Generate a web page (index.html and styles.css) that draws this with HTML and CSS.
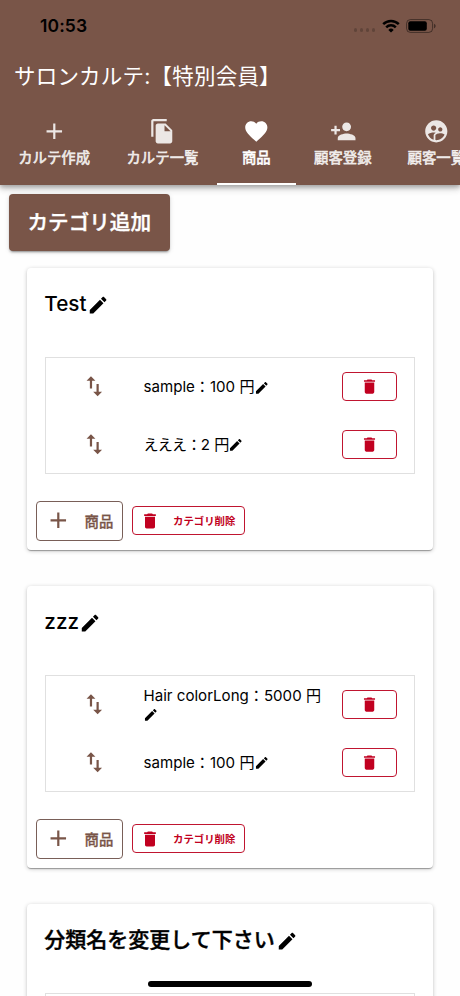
FILE: index.html
```
<!DOCTYPE html>
<html lang="ja">
<head>
<meta charset="utf-8">
<title>サロンカルテ</title>
<link rel="stylesheet" href="styles.css">
</head>
<body>
<svg class="defs" width="0" height="0">
  <symbol id="add" viewBox="0 0 24 24"><path d="M19 13h-6v6h-2v-6H5v-2h6V5h2v6h6v2z"/></symbol>
  <symbol id="copy" viewBox="0 0 24 24"><path d="M16 1H4c-1.100 0-2 .9-2 2v14h2V3h12V1zm-1 4l6 6v10c0 1.100-.9 2-2 2H7.990C6.890 23 6 22.100 6 21l.01-14c0-1.100.89-2 1.990-2h7zm-1 7h5.500L14 6.500V12z"/></symbol>
  <symbol id="heart" viewBox="0 0 24 24"><path d="M12 21.350l-1.450-1.320C5.400 15.360 2 12.280 2 8.500 2 5.420 4.420 3 7.500 3c1.740 0 3.410.81 4.500 2.090C13.090 3.810 14.760 3 16.500 3 19.580 3 22 5.420 22 8.500c0 3.780-3.400 6.860-8.550 11.540L12 21.350z"/></symbol>
  <symbol id="person-add" viewBox="0 0 24 24"><path d="M15 12c2.210 0 4-1.790 4-4s-1.790-4-4-4-4 1.790-4 4 1.790 4 4 4zm-9-2V7H4v3H1v2h3v3h2v-3h3v-2H6zm9 4c-2.670 0-8 1.340-8 4v2h16v-2c0-2.660-5.330-4-8-4z"/></symbol>
  <symbol id="people" viewBox="0 0 24 24"><path d="M11.990 2c-5.520 0-10 4.480-10 10s4.480 10 10 10 10-4.480 10-10-4.480-10-10-10zm3.610 6.340c1.070 0 1.930.86 1.930 1.930 0 1.070-.86 1.930-1.930 1.930-1.070 0-1.930-.86-1.930-1.930-.01-1.070.86-1.930 1.930-1.930zm-6-1.580c1.300 0 2.360 1.060 2.360 2.360 0 1.300-1.060 2.360-2.360 2.360s-2.360-1.060-2.360-2.360c0-1.310 1.050-2.360 2.360-2.360zm0 9.130v3.750c-2.400-.75-4.300-2.600-5.140-4.960 1.050-1.120 3.670-1.690 5.140-1.690.53 0 1.200.08 1.900.22-1.640.87-1.900 2.020-1.900 2.680zM11.990 20c-.27 0-.53-.01-.79-.04v-4.070c0-1.420 2.940-2.130 4.400-2.130 1.070 0 2.920.39 3.840 1.150-1.170 2.970-4.060 5.090-7.450 5.090z"/></symbol>
  <symbol id="edit" viewBox="0 0 24 24"><path d="M3 17.250V21h3.750L17.810 9.940l-3.750-3.750L3 17.250zM20.710 7.040c.39-.39.39-1.020 0-1.410l-2.340-2.340c-.39-.39-1.020-.39-1.410 0l-1.830 1.830 3.750 3.750 1.830-1.830z"/></symbol>
  <symbol id="trash" viewBox="0 0 24 24"><path d="M6 19c0 1.100.9 2 2 2h8c1.100 0 2-.9 2-2V7H6v12zM19 4h-3.500l-1-1h-5l-1 1H5v2h14V4z"/></symbol>
  <symbol id="swap" viewBox="0 0 24 24"><path d="M9 3L5 6.990h3V14h2V6.990h3L9 3zm7 14.010V10h-2v7.010h-3L15 21l4-3.990h-3z"/></symbol>
</svg>

<header class="appbar">
  <div class="status">
    <span class="clock">10:53</span>
    <span class="dots"><i></i><i></i><i></i><i></i></span>
    <svg class="wifi" viewBox="0 0 18 14"><g fill="none" stroke="#000" stroke-width="2.500"><path d="M1.200 5.100a11.200 11.200 0 0 1 15.600 0"/><path d="M4.200 8.300a6.900 6.900 0 0 1 9.600 0"/></g><path d="M9 13.600l-2.700-2.700a3.900 3.900 0 0 1 5.400 0z"/></svg>
    <svg class="battery" viewBox="0 0 30 14"><rect x=".6" y=".6" width="26" height="12.800" rx="3.800" fill="none" stroke="#000" stroke-opacity=".45"/><rect x="2.300" y="2.300" width="18.500" height="9.400" rx="2"/><path d="M28 4.700c2.200.8 2.200 3.800 0 4.600z" fill-opacity=".45"/></svg>
  </div>
  <h1 class="title">サロンカルテ:【特別会員】</h1>
  <nav class="tabs">
    <a class="tab wide"><svg class="icon"><use href="#add"/></svg><span>カルテ作成</span></a>
    <a class="tab wide"><svg class="icon"><use href="#copy"/></svg><span>カルテ一覧</span></a>
    <a class="tab active"><svg class="icon"><use href="#heart"/></svg><span>商品</span></a>
    <a class="tab mid"><svg class="icon"><use href="#person-add"/></svg><span>顧客登録</span></a>
    <a class="tab mid"><svg class="icon"><use href="#people"/></svg><span>顧客一覧</span></a>
  </nav>
</header>

<main>
  <button class="add-category">カテゴリ追加</button>

  <section class="card">
    <h2 class="name"><span>Test</span><svg><use href="#edit"/></svg></h2>
    <div class="items">
      <div class="item"><svg class="icon"><use href="#swap"/></svg><p>sample：100 円<svg><use href="#edit"/></svg></p><button class="remove"><svg><use href="#trash"/></svg></button></div>
      <div class="item"><svg class="icon"><use href="#swap"/></svg><p><span class="kana">えええ：</span>2 円<svg><use href="#edit"/></svg></p><button class="remove"><svg><use href="#trash"/></svg></button></div>
    </div>
    <div class="actions">
      <button class="add-item"><svg class="icon"><use href="#add"/></svg><span>商品</span></button>
      <button class="remove-category"><svg><use href="#trash"/></svg><span>カテゴリ削除</span></button>
    </div>
  </section>

  <section class="card">
    <h2 class="name"><span>zzz</span><svg><use href="#edit"/></svg></h2>
    <div class="items">
      <div class="item"><svg class="icon"><use href="#swap"/></svg><p>Hair colorLong：5000 円<svg><use href="#edit"/></svg></p><button class="remove"><svg><use href="#trash"/></svg></button></div>
      <div class="item"><svg class="icon"><use href="#swap"/></svg><p>sample：100 円<svg><use href="#edit"/></svg></p><button class="remove"><svg><use href="#trash"/></svg></button></div>
    </div>
    <div class="actions">
      <button class="add-item"><svg class="icon"><use href="#add"/></svg><span>商品</span></button>
      <button class="remove-category"><svg><use href="#trash"/></svg><span>カテゴリ削除</span></button>
    </div>
  </section>

  <section class="card">
    <h2 class="name cjk"><span>分類名を変更して下さい</span><svg><use href="#edit"/></svg></h2>
    <div class="items"></div>
  </section>
</main>
<div class="home-indicator"></div>
</body>
</html>
```

FILE: styles.css
```
* { box-sizing: border-box; }

body {
  margin: 0;
  height: 996px;
  overflow: hidden;
  background: #fefefe;
  color: #000;
  font-family: Inter, "Noto Sans CJK JP", sans-serif;
}

svg { fill: currentColor; flex: none; }
button { font-family: inherit; padding: 0; }
.defs { display: none; }
.icon { width: 26.6px; height: 26.6px; }

.appbar {
  position: relative;
  height: 185px;
  background: #795548;
  color: #fff;
  box-shadow: 0 2px 4px rgba(0,0,0,.2), 0 4px 6px rgba(0,0,0,.14), 0 1px 11px rgba(0,0,0,.12);
}

.status {
  display: flex;
  align-items: center;
  height: 51px;
  padding: 0 24px 0 40px;
  color: #000;
}
.clock { font-size: 17.5px; font-weight: 600; letter-spacing: .1px; }
.dots { display: flex; gap: 2.600px; margin: 9px 7px 0 auto; }
.dots i { width: 3.400px; height: 3.400px; border-radius: 50%; background: rgba(0,0,0,.2); }
.wifi { width: 18px; height: 14px; margin-right: 6px; }
.battery { width: 30px; height: 14px; }

.title {
  margin: 0;
  height: 50px;
  padding-left: 14px;
  font-size: 21.5px;
  font-weight: 400;
  line-height: 50px;
  letter-spacing: .2px;
  white-space: nowrap;
}

.tabs { display: flex; height: 84px; overflow: hidden; }
.tab {
  display: flex;
  flex: none;
  flex-direction: column;
  align-items: center;
  width: 79.500px;
  padding-top: 17px;
  font-size: 14.4px;
  font-weight: 500;
  line-height: 22px;
  color: rgba(255,255,255,.86);
  white-space: nowrap;
}
.tab.wide { width: 108.3px; }
.tab.mid { width: 93.5px; }
.tab span { margin-top: 2.600px; -webkit-text-stroke: .4px currentColor; }
.tab.active { color: #fff; border-bottom: 2.500px solid #fff; }

.add-category {
  display: block;
  width: 160.500px;
  height: 57px;
  margin: 8.500px 0 17px 9px;
  padding-bottom: 2px;
  border: 0;
  border-radius: 4px;
  background: #795548;
  color: #fff;
  font-size: 20.6px;
  font-weight: 500;
  -webkit-text-stroke: .4px currentColor;
  box-shadow: 0 3px 1px -2px rgba(0,0,0,.2), 0 2px 2px rgba(0,0,0,.14), 0 1px 5px rgba(0,0,0,.12);
}

.card {
  height: 282.500px;
  margin: 0 27px 35.500px;
  padding: 18px 18px 0;
  border-radius: 4px;
  background: #fff;
  box-shadow: 0 2px 1px -1px rgba(0,0,0,.2), 0 1px 1px rgba(0,0,0,.14), 0 1px 4px rgba(0,0,0,.22);
}
.name {
  display: flex;
  align-items: center;
  height: 36px;
  margin: 0 0 35.500px -.7px;
  font-size: 20.7px;
  font-weight: 500;
}
.name svg { width: 22.2px; height: 22.2px; margin-top: 3px; }
.name.cjk span { padding-bottom: 3px; font-size: 21px; -webkit-text-stroke: .4px currentColor; }
.name.cjk svg { margin-left: 1px; }

.items { height: 117px; border: 1px solid #e0e0e0; }
.item {
  display: grid;
  grid-template-columns: 97.5px 1fr 54.500px;
  align-items: center;
  height: 57.500px;
  padding-right: 17.500px;
}
.item > .icon { justify-self: center; color: #795548; }
.item p { width: 184px; margin: 0; font-size: 15.1px; line-height: 19px; }
.item p svg { width: 15.6px; height: 15.6px; margin-left: -.8px; vertical-align: -3px; }
.kana { letter-spacing: -.8px; }

.remove, .add-item, .remove-category {
  display: flex;
  align-items: center;
  border-radius: 4px;
  background: #fff;
}
.remove, .remove-category { height: 29px; border: 1.300px solid #c01530; color: #c10020; }
.remove { justify-content: center; width: 54.500px; }
.remove svg { width: 19px; height: 19px; }

.actions { display: flex; align-items: center; gap: 9px; margin: 26.500px 0 0 -9px; }
.add-item {
  width: 87px;
  height: 40px;
  padding-left: 8px;
  border: 1.300px solid #795f58;
  color: #795548;
  font-size: 14.4px;
  font-weight: 500;
}
.add-item span { margin: 0 0 1px 13px; -webkit-text-stroke: .3px currentColor; }
.remove-category { width: 112.500px; padding-left: 7px; font-size: 10.4px; font-weight: 700; }
.remove-category svg { width: 20px; height: 20px; }
.remove-category span { margin-left: 13px; white-space: nowrap; }

.home-indicator {
  position: absolute;
  left: 148px;
  top: 981px;
  width: 164px;
  height: 5.500px;
  border-radius: 3px;
  background: #000;
}
```
